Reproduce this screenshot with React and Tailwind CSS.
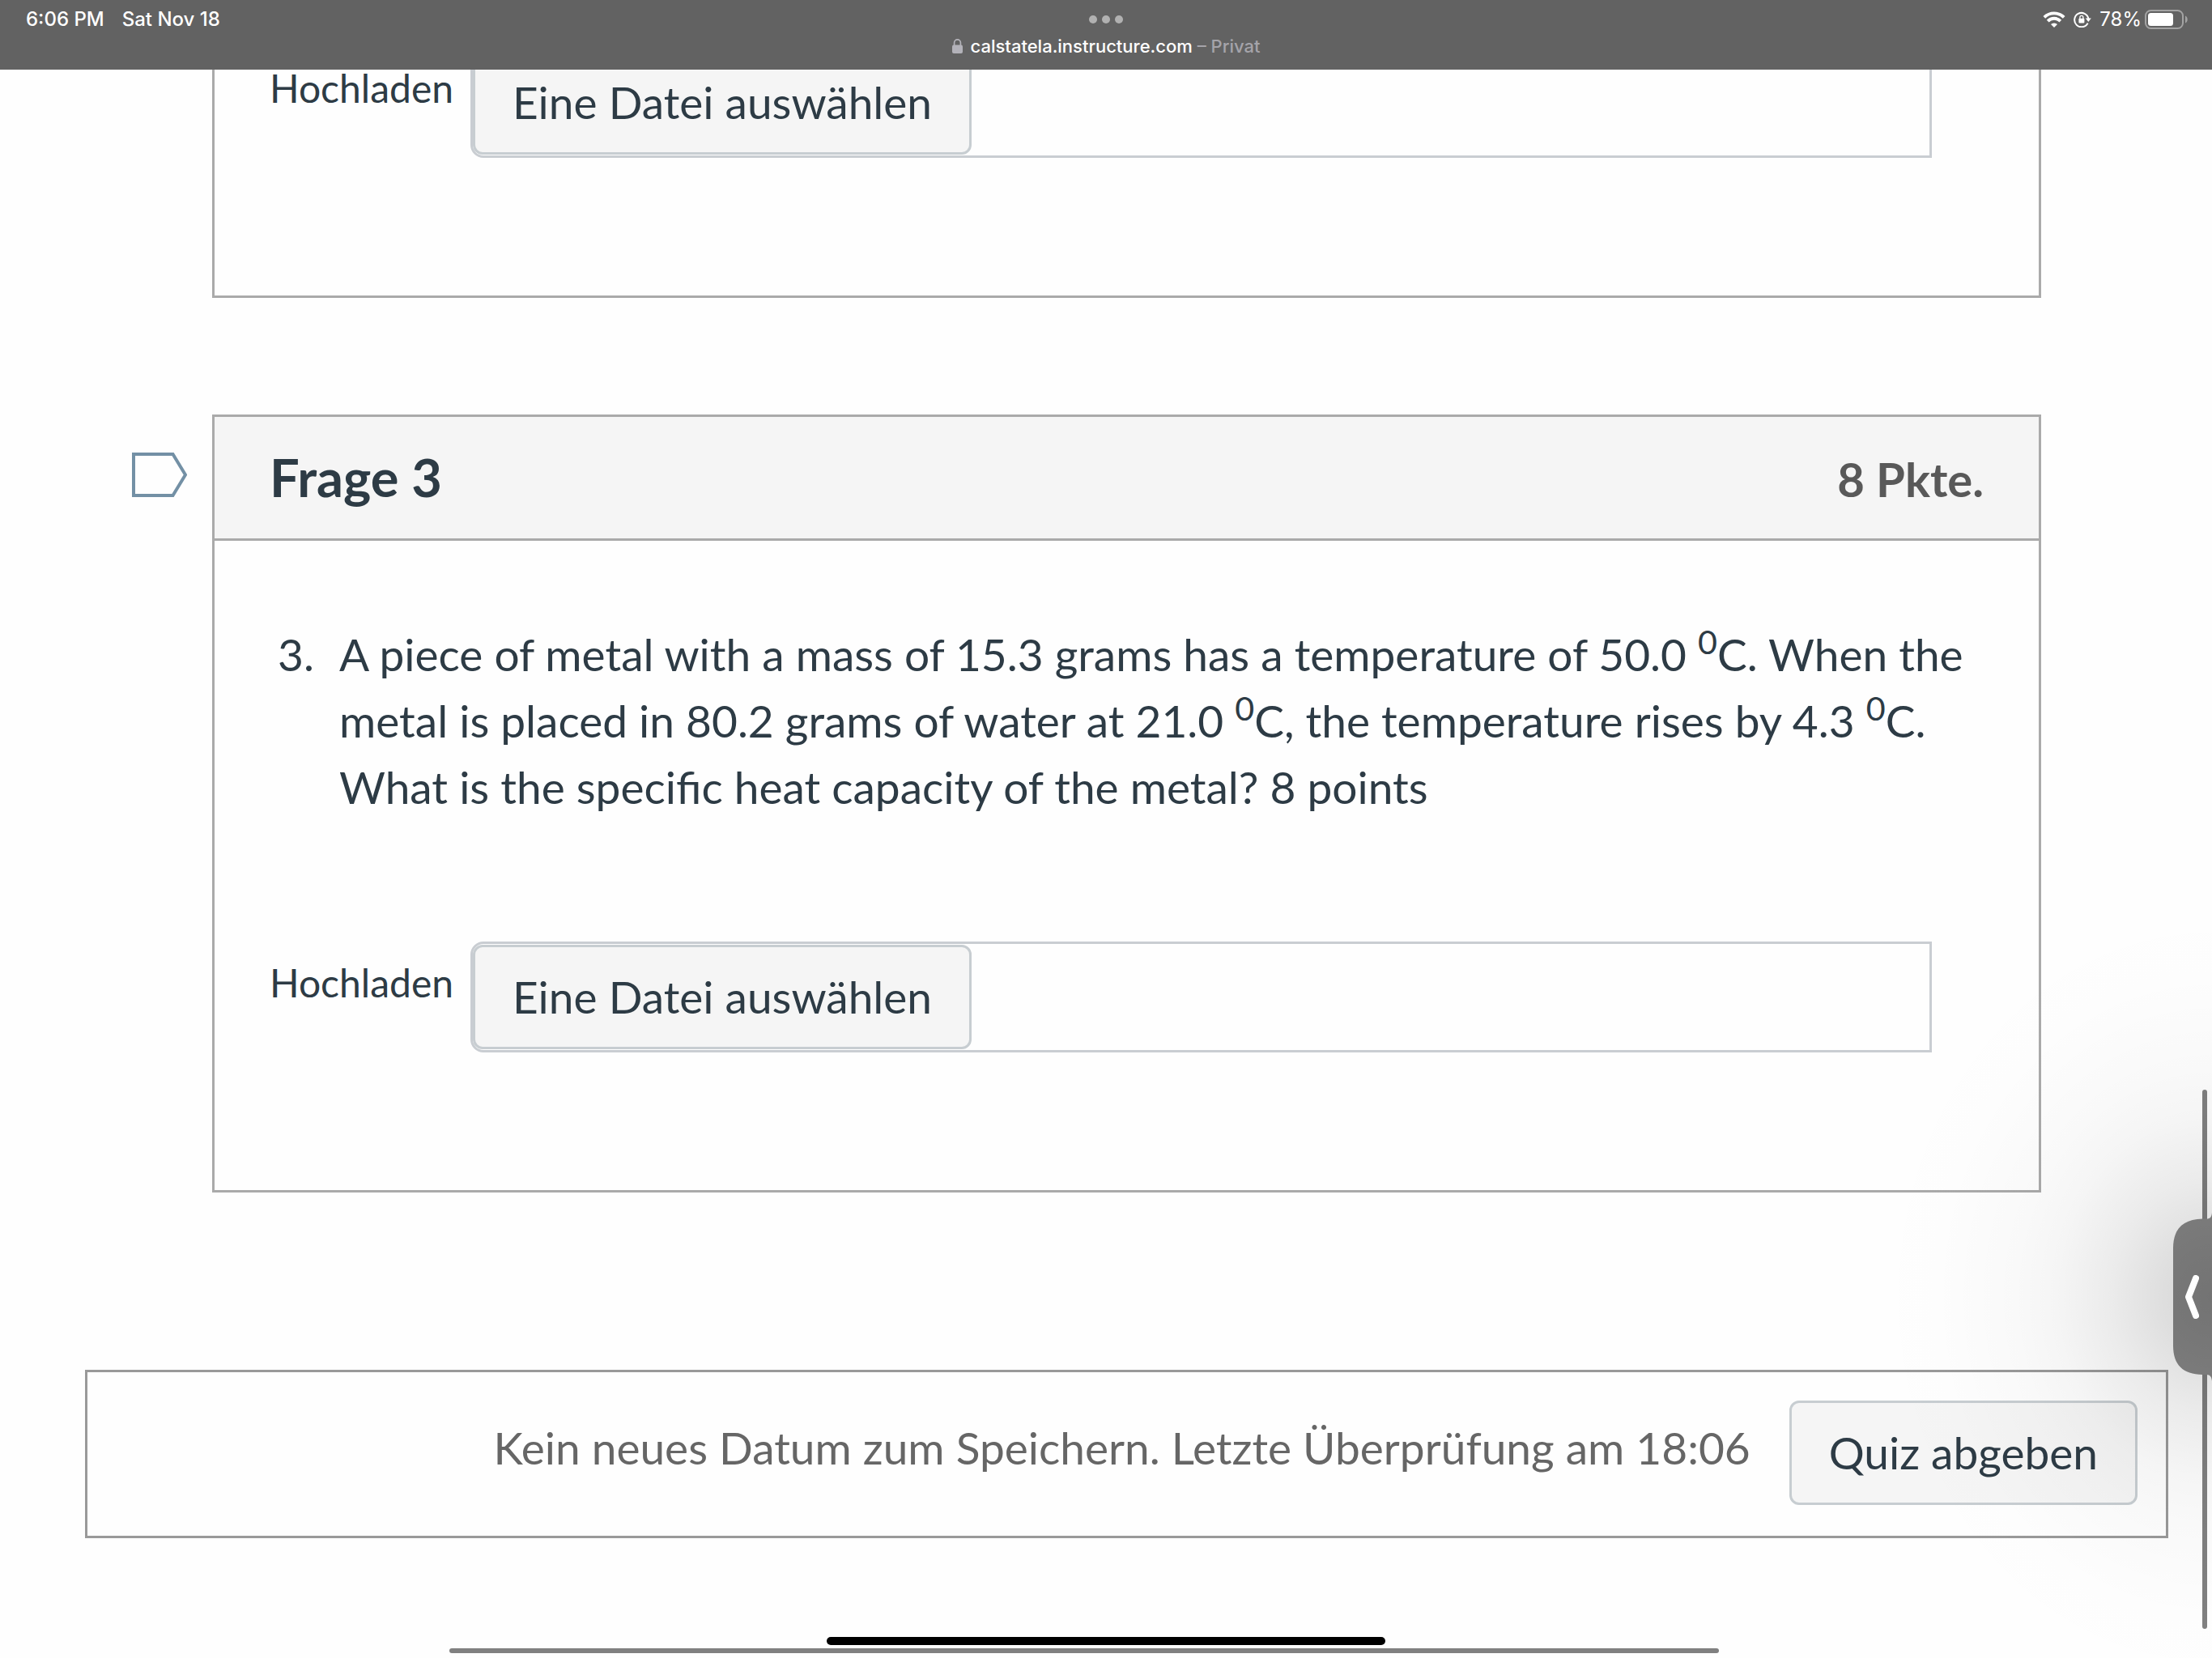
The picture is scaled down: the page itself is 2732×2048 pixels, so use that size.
import React, { useRef } from 'react';

function WifiIcon() {
    return (
        <svg className="h-5 w-7" viewBox="0 0 28 20" fill="none" aria-hidden="true">
            <path d="M1.8 7.4 A17.4 17.4 0 0 1 26.2 7.4" stroke="white" strokeWidth="3.8" />
            <path d="M6.2 12.1 A10.8 10.8 0 0 1 21.8 12.1" stroke="white" strokeWidth="3.8" />
            <path d="M14 20 L10 16 A5.8 5.8 0 0 1 18 16 Z" fill="white" />
        </svg>
    );
}

function RotationLockIcon() {
    return (
        <svg className="h-5 w-[22px]" viewBox="0 0 22 20" fill="none" aria-hidden="true">
            <path d="M17.6 14.6 A8.7 8.7 0 1 1 18.4 9" stroke="white" strokeWidth="2" />
            <path d="M14.8 8.6 H21.8 L18.3 13 Z" fill="white" />
            <rect x="6.4" y="8.8" width="7" height="5.6" rx="1" fill="white" />
            <path d="M7.9 9 V7.4 A2 2 0 0 1 11.9 7.4 V9" stroke="white" strokeWidth="1.3" />
        </svg>
    );
}

function BatteryIcon() {
    return (
        <svg className="h-6 w-[54px]" viewBox="0 0 54 24" fill="none" aria-hidden="true">
            <rect x="1" y="1" width="46" height="22" rx="6.5" stroke="#a3a3a3" strokeWidth="2" />
            <rect x="4" y="4" width="31" height="16" rx="3.5" fill="white" />
            <path d="M50 7.5 C53.6 8.6 53.6 15.4 50 16.5 Z" fill="#a3a3a3" />
        </svg>
    );
}

function LockIcon() {
    return (
        <svg className="h-[18px] w-[13px]" viewBox="0 0 13 18" fill="none" aria-hidden="true">
            <rect x="0" y="7.4" width="13" height="10.6" rx="2" fill="#b3b2b9" />
            <path d="M2.6 8 V4.8 A3.9 3.9 0 0 1 10.4 4.8 V8" stroke="#b3b2b9" strokeWidth="1.7" />
        </svg>
    );
}

function StatusBar() {
    return (
        <header className="relative z-10 h-[86px] bg-[#626262] font-['Inter',sans-serif] text-2xl/[28px] text-white">
            <div className="grid grid-cols-3 pt-[10px]">
                <div className="flex gap-[22px] pl-8 font-medium">
                    <span>6:06 PM</span>
                    <span>Sat Nov 18</span>
                </div>
                <button className="flex items-center justify-center gap-1.5" aria-label="Multitasking">
                    <span className="size-2.5 rounded-full bg-[#b1b1b1]" />
                    <span className="size-2.5 rounded-full bg-[#b1b1b1]" />
                    <span className="size-2.5 rounded-full bg-[#b1b1b1]" />
                </button>
                <div className="flex items-center justify-end pr-[29px]">
                    <WifiIcon />
                    <span className="w-2.5" />
                    <RotationLockIcon />
                    <span className="ml-2.5 mr-1">78%</span>
                    <BatteryIcon />
                </div>
            </div>
            <div className="flex items-center justify-center gap-2.5 pt-1 text-[22px]/[30px] font-medium">
                <LockIcon />
                <p>
                    calstatela.instructure.com <span className="text-[#a5a4aa]">– Privat</span>
                </p>
            </div>
        </header>
    );
}

function UploadRow({ id }) {
    const fileInput = useRef(null);

    return (
        <div className="mr-16 flex items-start">
            <label htmlFor={id} className="w-[248px] shrink-0 pt-5 text-[48px]/[62px]">
                Hochladen
            </label>
            <div className="flex grow rounded-l-2xl border-3 border-[#c9cdd2]">
                {/* The native input stays hidden, the button opens it */}
                <input id={id} ref={fileInput} type="file" className="hidden" />
                <button
                    onClick={() => fileInput.current.click()}
                    className="my-px h-[129px] rounded-xl border-3 border-[#c7cdd1] bg-[#f5f5f5] px-[46px] pb-0.5 text-[55px]/[82px]"
                >
                    Eine Datei auswählen
                </button>
            </div>
        </div>
    );
}

function Degrees() {
    return <><sup>0</sup>C</>;
}

export default function App() {
    return (
        <div className="relative min-h-screen overflow-hidden bg-[#fefefe] font-['Lato',sans-serif] text-[#2d3b45]">
            <StatusBar />

            <main>
                {/* Previous question, scrolled under the status bar */}
                <section className="-mt-7 ml-[262px] mr-[211px] border-3 border-t-0 border-[#aaaaaa] px-17 pb-[170px]">
                    <UploadRow id="upload-2" />
                </section>

                <div className="mt-36 flex items-start pl-[163px] pr-[211px]">
                    <button className="mt-[47px] w-[99px] shrink-0" aria-label="Frage markieren">
                        <svg className="h-[55px] w-17" viewBox="0 0 68 55" fill="none">
                            <path d="M2 2 H50.500 L66 27.5 L50.500 53 H2 Z" stroke="#7390a5" strokeWidth="4" />
                        </svg>
                    </button>

                    <section className="grow border-3 border-[#aaaaaa]">
                        <div className="flex h-[153px] items-baseline justify-between border-b-3 border-[#aaaaaa] bg-[#f5f5f5] px-17 pt-[35px] font-bold">
                            <h2 className="text-[65px]/[78px]">Frage 3</h2>
                            <span className="text-[58px]/[78px] text-[#595959]">8 Pkte.</span>
                        </div>
                        <div className="px-17 pb-[170px] pt-[99px]">
                            <ol className="mb-[150px] text-[55px]/[82px]">
                                <li className="flex">
                                    <span className="w-[86px] shrink-0 pl-2.5">3.</span>
                                    <p>
                                        A piece of metal with a mass of 15.3 grams has a temperature of 50.0 <Degrees />. When the
                                        metal is placed in 80.2 grams of water at 21.0 <Degrees />, the temperature rises by
                                        4.3 <Degrees />. What is the specific heat capacity of the metal? 8 points
                                    </p>
                                </li>
                            </ol>
                            <UploadRow id="upload-3" />
                        </div>
                    </section>
                </div>

                <div className="ml-[105px] mr-[54px] mt-[219px] flex items-start justify-end gap-12 border-3 border-[#999999] pb-[38px] pl-9 pr-[35px] pt-[35px] text-[55px]">
                    <p className="leading-[116px] text-[#666666]">
                        Kein neues Datum zum Speichern. Letzte Überprüfung am 18:06
                    </p>
                    <button className="h-[129px] shrink-0 rounded-xl border-3 border-[#c7cdd1] bg-[#f5f5f5] px-[46px] pb-0.5 leading-[82px]">
                        Quiz abgeben
                    </button>
                </div>
            </main>

            {/* Scroll indicators and home bar */}
            <div className="absolute right-1.5 top-[1346px] h-[666px] w-1.5 rounded-full bg-[#808080]" />
            <div className="absolute bottom-1.5 left-[20.3%] h-1.5 w-[57.4%] rounded-full bg-[#808080]" />
            <div className="absolute bottom-4 left-1/2 h-2.5 w-[690px] -translate-x-1/2 rounded-full bg-black" />

            {/* Slide-over handle and its shadow */}
            <svg className="absolute right-0 top-[1498px] h-[208px] w-12" viewBox="0 0 48 208" fill="#898989" aria-hidden="true">
                <path d="M48 0 C47.5 5 46 7.5 41 7.5 H36 C12 8 0 20 0 44 V164 C0 188 12 199.5 36 200 H41 C46 200 47.5 203 48 208 Z" />
            </svg>
            <div className="pointer-events-none absolute right-0 top-[1102px] h-[1000px] w-[430px] bg-[radial-gradient(ellipse_430px_500px_at_100%_50%,rgba(0,0,0,0.16)_0%,rgba(0,0,0,0.125)_14%,rgba(0,0,0,0.075)_29%,rgba(0,0,0,0.036)_45%,rgba(0,0,0,0.018)_57%,rgba(0,0,0,0.005)_80%,transparent_100%)]" />
            <button className="absolute right-0 top-[1506px] flex h-48 w-12 items-center pl-[15px]" aria-label="Slide Over">
                <svg className="h-[54px] w-[17px]" viewBox="0 0 17 54" fill="none">
                    <path d="M13 4 L4 27 L13 50" stroke="white" strokeWidth="8" strokeLinecap="round" strokeLinejoin="round" />
                </svg>
            </button>
        </div>
    );
}
